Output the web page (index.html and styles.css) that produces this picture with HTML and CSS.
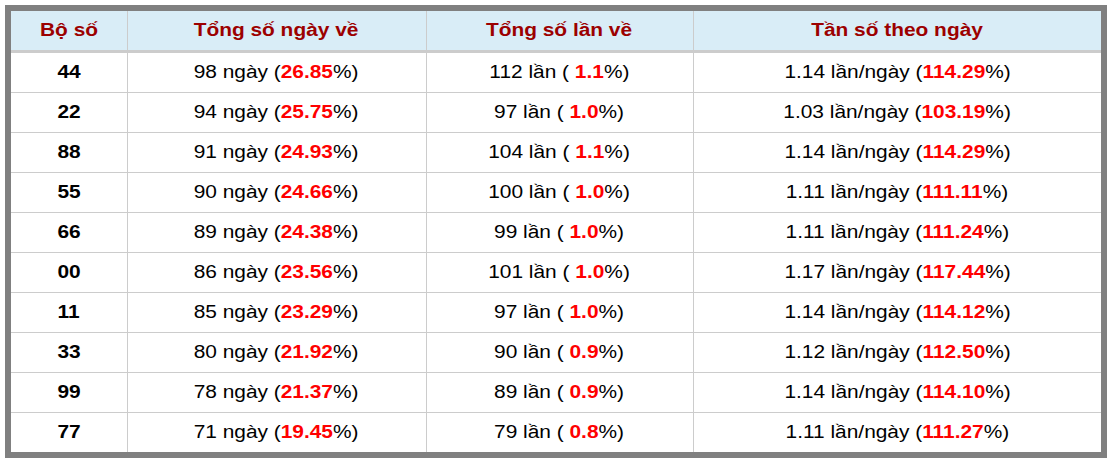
FILE: index.html
```html
<!DOCTYPE html>
<html>
<head>
<meta charset="utf-8">
<link rel="stylesheet" href="styles.css">
</head>
<body>
<div class="frame">
<table class="stats">
<colgroup><col class="c1"><col class="c2"><col class="c3"><col class="c4"></colgroup>
<thead>
<tr><th><span class="t">Bộ số</span></th><th><span class="t">Tổng số ngày về</span></th><th><span class="t">Tổng số lần về</span></th><th><span class="t">Tần số theo ngày</span></th></tr>
</thead>
<tbody>
<tr><td class="num"><span class="t">44</span></td><td><span class="t">98 ngày (<b>26.85</b>%)</span></td><td><span class="t">112 lần ( <b>1.1</b>%)</span></td><td><span class="t">1.14 lần/ngày (<b>114.29</b>%)</span></td></tr>
<tr><td class="num"><span class="t">22</span></td><td><span class="t">94 ngày (<b>25.75</b>%)</span></td><td><span class="t">97 lần ( <b>1.0</b>%)</span></td><td><span class="t">1.03 lần/ngày (<b>103.19</b>%)</span></td></tr>
<tr><td class="num"><span class="t">88</span></td><td><span class="t">91 ngày (<b>24.93</b>%)</span></td><td><span class="t">104 lần ( <b>1.1</b>%)</span></td><td><span class="t">1.14 lần/ngày (<b>114.29</b>%)</span></td></tr>
<tr><td class="num"><span class="t">55</span></td><td><span class="t">90 ngày (<b>24.66</b>%)</span></td><td><span class="t">100 lần ( <b>1.0</b>%)</span></td><td><span class="t">1.11 lần/ngày (<b>111.11</b>%)</span></td></tr>
<tr><td class="num"><span class="t">66</span></td><td><span class="t">89 ngày (<b>24.38</b>%)</span></td><td><span class="t">99 lần ( <b>1.0</b>%)</span></td><td><span class="t">1.11 lần/ngày (<b>111.24</b>%)</span></td></tr>
<tr><td class="num"><span class="t">00</span></td><td><span class="t">86 ngày (<b>23.56</b>%)</span></td><td><span class="t">101 lần ( <b>1.0</b>%)</span></td><td><span class="t">1.17 lần/ngày (<b>117.44</b>%)</span></td></tr>
<tr><td class="num"><span class="t">11</span></td><td><span class="t">85 ngày (<b>23.29</b>%)</span></td><td><span class="t">97 lần ( <b>1.0</b>%)</span></td><td><span class="t">1.14 lần/ngày (<b>114.12</b>%)</span></td></tr>
<tr><td class="num"><span class="t">33</span></td><td><span class="t">80 ngày (<b>21.92</b>%)</span></td><td><span class="t">90 lần ( <b>0.9</b>%)</span></td><td><span class="t">1.12 lần/ngày (<b>112.50</b>%)</span></td></tr>
<tr><td class="num"><span class="t">99</span></td><td><span class="t">78 ngày (<b>21.37</b>%)</span></td><td><span class="t">89 lần ( <b>0.9</b>%)</span></td><td><span class="t">1.14 lần/ngày (<b>114.10</b>%)</span></td></tr>
<tr><td class="num"><span class="t">77</span></td><td><span class="t">71 ngày (<b>19.45</b>%)</span></td><td><span class="t">79 lần ( <b>0.8</b>%)</span></td><td><span class="t">1.11 lần/ngày (<b>111.27</b>%)</span></td></tr>
</tbody>
</table>
</div>
</body>
</html>
```
FILE: styles.css
```css
html, body {
  margin: 0;
  padding: 0;
  background: #fff;
}
body {
  padding: 5px 1px 0 5px;
  font-family: "Liberation Sans", Arial, sans-serif;
}
.frame {
  border: 6px solid #808080;
  width: 1090px;
  background: #fff;
}
.stats {
  width: 1090px;
  border-collapse: collapse;
  table-layout: fixed;
  font-size: 18px;
  color: #000;
}
.c1 { width: 116px; }
.c2 { width: 299px; }
.c3 { width: 267px; }
.c4 { width: 408px; }
.t {
  display: inline-block;
  transform: scaleX(1.16);
  white-space: nowrap;
}
.stats th {
  background: #d9edf7;
  color: #9c0000;
  font-weight: bold;
  height: 39px;
  padding: 0;
  border-left: 1px solid #cccccc;
  border-bottom: 3px solid #cccccc;
  text-align: center;
  vertical-align: middle;
}
.stats td {
  height: 39px;
  padding: 0;
  text-align: center;
  vertical-align: middle;
  border-left: 1px solid #cccccc;
  border-top: 1px solid #cccccc;
}
.stats tbody tr:first-child td { border-top: none; height: 39px; }
.stats th:first-child, .stats td:first-child { border-left: none; }
.stats td.num { font-weight: bold; }
.stats td b { color: #ff0000; }
```
